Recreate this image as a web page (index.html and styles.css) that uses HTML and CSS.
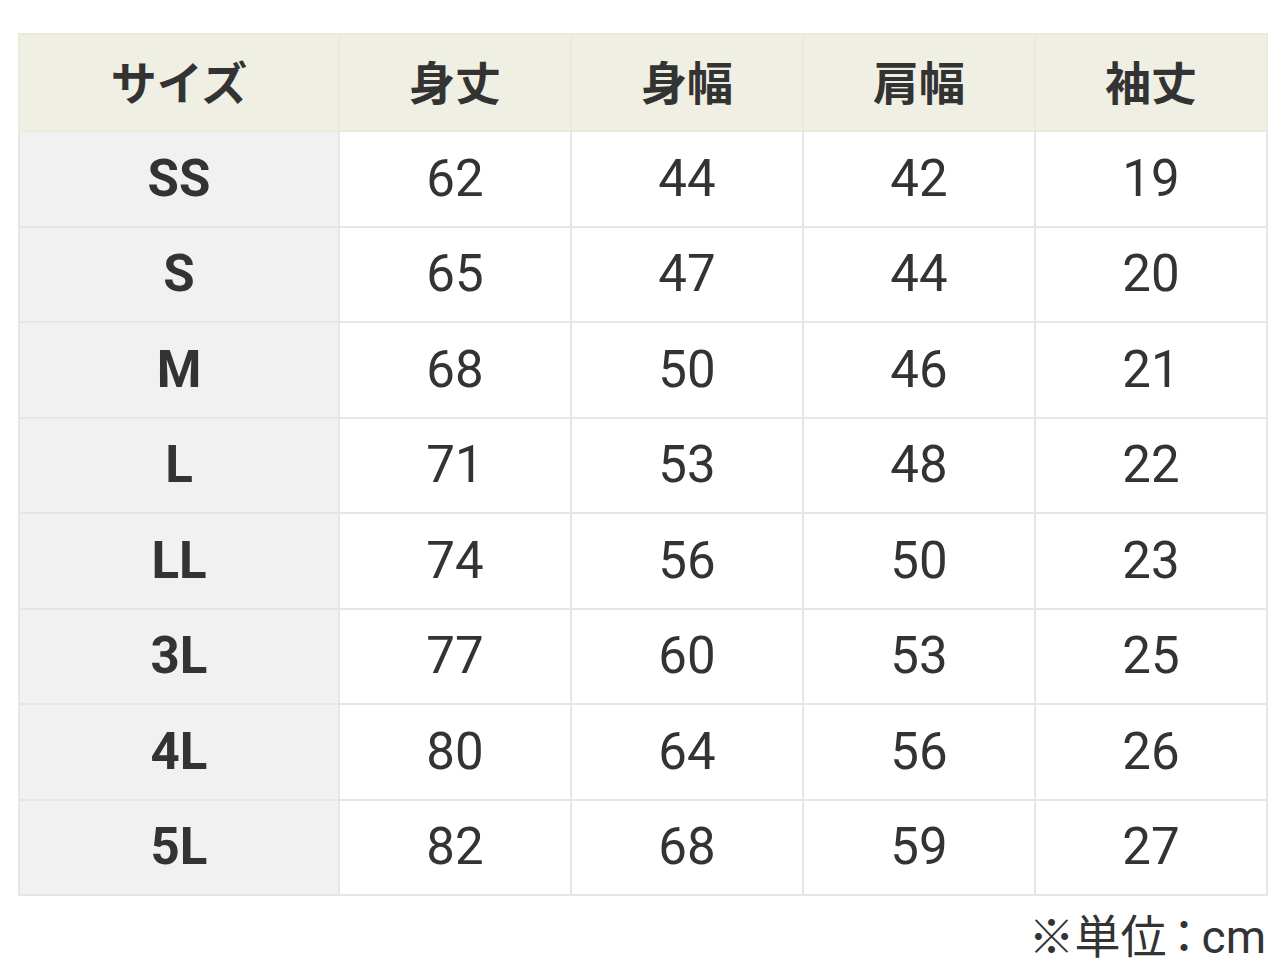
FILE: index.html
```html
<!DOCTYPE html>
<html lang="ja">
<head>
<meta charset="utf-8">
<link rel="stylesheet" href="styles.css">
</head>
<body>
<div class="wrap">
<table class="size-table">
<thead>
<tr><th class="c-size">サイズ</th><th>身丈</th><th>身幅</th><th>肩幅</th><th>袖丈</th></tr>
</thead>
<tbody>
<tr><th class="c-size">SS</th><td>62</td><td>44</td><td>42</td><td>19</td></tr>
<tr><th class="c-size">S</th><td>65</td><td>47</td><td>44</td><td>20</td></tr>
<tr><th class="c-size">M</th><td>68</td><td>50</td><td>46</td><td>21</td></tr>
<tr><th class="c-size">L</th><td>71</td><td>53</td><td>48</td><td>22</td></tr>
<tr><th class="c-size">LL</th><td>74</td><td>56</td><td>50</td><td>23</td></tr>
<tr><th class="c-size">3L</th><td>77</td><td>60</td><td>53</td><td>25</td></tr>
<tr><th class="c-size">4L</th><td>80</td><td>64</td><td>56</td><td>26</td></tr>
<tr><th class="c-size">5L</th><td>82</td><td>68</td><td>59</td><td>27</td></tr>
</tbody>
</table>
<p class="unit">※単位<span class="colon">：</span>cm</p>
</div>
</body>
</html>
```
FILE: styles.css
```css
html, body {
  margin: 0;
  padding: 0;
  background: #ffffff;
}
body {
  font-family: Roboto, "Noto Sans CJK JP", sans-serif;
  color: #333333;
}
.wrap {
  padding: 33px 12px 0 18px;
}
.size-table {
  width: 1250px;
  border-collapse: collapse;
  table-layout: fixed;
}
.size-table th,
.size-table td {
  border: 2px solid #e6e6e6;
  text-align: center;
  vertical-align: middle;
  padding: 0 0 1px;
  height: 92.5px;
  font-size: 51px;
  line-height: 1;
}
.size-table thead th {
  background: #f0efe3;
  font-family: "Noto Sans CJK JP", sans-serif;
  font-weight: 700;
  font-size: 46px;
  height: 89px;
  padding: 0 0 6px;
  border-color: #ebeadf;
}
.size-table tbody th {
  background: #f1f1f1;
  font-weight: 700;
}
.size-table td {
  font-weight: 400;
}
.size-table .c-size {
  width: 318px;
}
.unit {
  margin: 10px 2px 0 0;
  text-align: right;
  font-size: 46px;
  line-height: 1.2;
  color: #333333;
}
.colon {
  font-family: "Noto Sans CJK JP", sans-serif;
  font-feature-settings: "palt";
  margin: 0 6px;
}
```
